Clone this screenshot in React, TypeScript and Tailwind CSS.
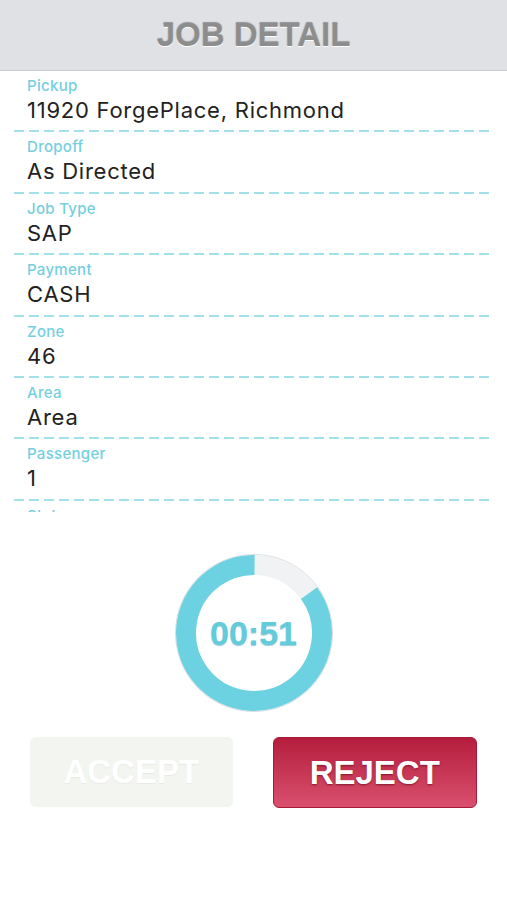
import React from "react";

type Field = { label: string; value?: string };

const fields: Field[] = [
  { label: "Pickup", value: "11920 ForgePlace, Richmond" },
  { label: "Dropoff", value: "As Directed" },
  { label: "Job Type", value: "SAP" },
  { label: "Payment", value: "CASH" },
  { label: "Zone", value: "46" },
  { label: "Area", value: "Area" },
  { label: "Passenger", value: "1" },
  { label: "Status" },
];

function Timer({ seconds, total }: { seconds: number; total: number }) {
  const r = 68;
  const c = 2 * Math.PI * r;
  const left = (seconds / total) * c;
  const startDeg = -90 + ((total - seconds) / total) * 360;
  return (
    <div className="relative h-[158px] w-[158px]">
      <svg width="158" height="158" viewBox="0 0 158 158" className="absolute inset-0">
        <circle cx="79" cy="79" r="78.5" fill="none" stroke="#dcdde0" strokeWidth="1" />
        <circle cx="79" cy="79" r={r} fill="none" stroke="#f1f2f4" strokeWidth="20" />
        <circle
          cx="79"
          cy="79"
          r={r}
          fill="none"
          stroke="#6cd2e2"
          strokeWidth="20"
          strokeDasharray={`${left} ${c}`}
          transform={`rotate(${startDeg} 79 79)`}
        />
      </svg>
      <div className="absolute inset-0 flex items-center justify-center">
        <span className="font-['Liberation_Sans',Arial,sans-serif] text-[34px] font-bold text-[#62cbdc] [text-shadow:0_1px_1px_rgba(40,130,150,0.45)]">
          00:{String(seconds).padStart(2, "0")}
        </span>
      </div>
    </div>
  );
}

export default function App() {
  return (
    <div className="flex h-[900px] w-full flex-col bg-white font-['Liberation_Sans',Arial,sans-serif]">
      <header className="flex h-[71px] shrink-0 items-center justify-center border-b border-[#c9cacd] bg-[#e0e1e5]">
        <h1 className="text-[33px] font-bold text-[#8d8d8d] [text-shadow:0_1px_0_#ffffff,0_-1px_1px_rgba(0,0,0,0.35)]">
          JOB DETAIL
        </h1>
      </header>

      <div className="h-[441px] shrink-0 overflow-hidden font-['Inter',sans-serif]">
        {fields.map((f) => (
          <div key={f.label} className="flex h-[61.4px] flex-col">
            <div className="pl-[27px] pt-[6px] text-[15px] leading-[18px] font-medium tracking-[0.3px] text-[#74cfe0]">
              {f.label}
            </div>
            {f.value && (
              <div className="mt-[2px] pl-[27px] text-[22px] leading-[26px] tracking-[0.75px] text-[#222222]">
                {f.value}
              </div>
            )}
            <div className="mx-[14px] mt-auto h-[2px] bg-[linear-gradient(to_right,#a2e0ea_10px,transparent_10px)] bg-[length:15px_2px]" />
          </div>
        ))}
      </div>

      <div className="mt-[42px] flex justify-center">
        <Timer seconds={51} total={60} />
      </div>

      <div className="mt-[25px] flex gap-[40px] px-[30px]">
        <button className="h-[70px] flex-1 rounded-[6px] bg-[#f2f5f0] text-[33px] font-bold text-white [text-shadow:0_1px_1px_rgba(0,0,0,0.05)]">
          ACCEPT
        </button>
        <button className="h-[71px] flex-1 rounded-[6px] border border-[#a71b38] bg-[linear-gradient(to_bottom,#b51d3d,#d9506e)] text-[33px] font-bold text-white [text-shadow:0_1px_2px_rgba(80,0,20,0.6)]">
          REJECT
        </button>
      </div>
    </div>
  );
}
